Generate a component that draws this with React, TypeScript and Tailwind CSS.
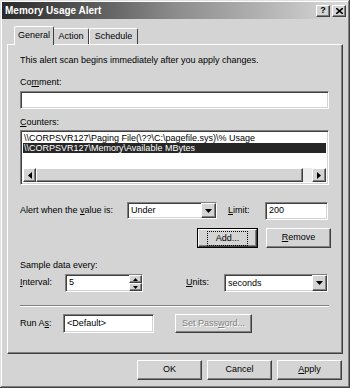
import React from 'react';

const raised =
  'border border-t-white border-l-white border-r-[#404040] border-b-[#404040] shadow-[inset_-1px_-1px_0_#808080] bg-[#d4d4d4]';
const sunken =
  'border border-t-[#808080] border-l-[#808080] border-r-white border-b-white shadow-[inset_1px_1px_0_#404040,inset_-1px_-1px_0_#d4d4d4]';

const Arrow: React.FC<{ dir: 'down' | 'up' | 'left' | 'right'; size?: number }> = ({ dir, size = 7 }) => {
  const h = Math.ceil(size / 2) + 0;
  const pts: Record<string, string> = {
    down: `0,0 ${size},0 ${size / 2},${h}`,
    up: `0,${h} ${size},${h} ${size / 2},0`,
    left: `${h},0 ${h},${size} 0,${size / 2}`,
    right: `0,0 0,${size} ${h},${size / 2}`,
  };
  const vertical = dir === 'down' || dir === 'up';
  return (
    <svg width={vertical ? size : h} height={vertical ? h : size} className="block">
      <polygon points={pts[dir]} fill="#000" />
    </svg>
  );
};

const Select: React.FC<{ value: string; className: string }> = ({ value, className }) => (
  <div className={`${sunken} bg-white flex items-center ${className}`}>
    <span className="pl-[3px] flex-1 leading-none">{value}</span>
    <div className={`${raised} w-[15px] h-full flex items-center justify-center`}>
      <Arrow dir="down" />
    </div>
  </div>
);

const Button: React.FC<{ children: React.ReactNode; className: string; disabled?: boolean }> = ({
  children,
  className,
  disabled,
}) => (
  <div
    className={`${raised} flex items-center justify-center ${className} ${
      disabled ? 'text-[#808080] [text-shadow:1px_1px_0_#fff]' : ''
    }`}
  >
    {children}
  </div>
);

export default function App() {
  return (
    <div className="w-[350px] h-[388px] bg-[#d4d4d4] p-[2px] shadow-[inset_-1px_-1px_0_#404040,inset_1px_1px_0_#e0e0e0,inset_-2px_-2px_0_#808080,inset_2px_2px_0_#fff] font-['Liberation_Sans',Arial,sans-serif] text-[9px] text-black flex flex-col">
      {/* title bar */}
      <div className="h-[17px] bg-linear-to-r from-[#2a2a2a] via-[#8c8c8c] to-[#dadada] flex items-center pl-[3px] pr-[2px]">
        <span className="text-white font-bold text-[10px] leading-none">Memory Usage Alert</span>
        <div className="ml-auto flex gap-[2px]">
          <div className={`${raised} w-[14px] h-[12px] flex items-center justify-center font-bold text-[9px] leading-none`}>
            ?
          </div>
          <div className={`${raised} w-[14px] h-[12px] flex items-center justify-center`}>
            <svg width="7" height="6">
              <path d="M0 0 L7 6 M7 0 L0 6" stroke="#000" strokeWidth="1.6" />
            </svg>
          </div>
        </div>
      </div>

      {/* tabs */}
      <div className="flex items-end pl-[12px] mt-[6px] h-[19px] relative z-10">
        <div className="w-[40px] h-[19px] bg-[#d4d4d4] border-t border-l border-white border-r border-r-[#404040] rounded-t-[2px] flex items-center justify-center -mb-[1px] pb-[1px]">
          General
        </div>
        <div className="w-[35px] h-[16px] border-t border-t-white border-r border-r-[#404040] rounded-tr-[2px] flex items-center justify-center">
          Action
        </div>
        <div className="w-[49px] h-[16px] border-t border-l border-white border-r border-r-[#404040] rounded-t-[2px] flex items-center justify-center">
          Schedule
        </div>
      </div>

      {/* tab page */}
      <div className="ml-[5px] w-[336px] h-[310px] border border-t-white border-l-white border-r-[#404040] border-b-[#404040] shadow-[inset_-1px_-1px_0_#808080] pl-[12px] pr-[13px] flex flex-col">
        <div className="mt-[10px] h-[11px] leading-[11px]">
          This alert scan begins immediately after you apply changes.
        </div>
        <div className="mt-[11px] h-[11px] leading-[11px]">
          Co<u>m</u>ment:
        </div>
        <div className={`${sunken} mt-[3px] h-[18px] bg-white`} />
        <div className="mt-[8px] h-[11px] leading-[11px]">
          <u>C</u>ounters:
        </div>
        <div className={`${sunken} mt-[2px] h-[55px] bg-white flex flex-col p-[2px]`}>
          <div className="h-[10px] leading-[10px] whitespace-nowrap pl-[1px]">
            {'\\\\CORPSVR127\\Paging File(\\??\\C:\\pagefile.sys)\\% Usage'}
          </div>
          <div className="h-[10px] leading-[10px] whitespace-nowrap pl-[1px] bg-[#262626] text-white">
            {'\\\\CORPSVR127\\Memory\\Available MBytes'}
          </div>
          <div className="mt-auto h-[14px] flex">
            <div className={`${raised} w-[13px] h-full flex items-center justify-center`}>
              <Arrow dir="left" />
            </div>
            <div className={`${raised} flex-1 h-full`} />
            <div className="w-[9px] h-full bg-[#ececec]" />
            <div className={`${raised} w-[14px] h-full flex items-center justify-center`}>
              <Arrow dir="right" />
            </div>
          </div>
        </div>

        <div className="mt-[17px] h-[17px] flex items-center">
          <span className="w-[107px]">
            Alert when the <u>v</u>alue is:
          </span>
          <Select value="Under" className="w-[90px] h-[17px]" />
          <span className="ml-[11px] w-[37px]">
            <u>L</u>imit:
          </span>
          <div className={`${sunken} w-[63px] h-[18px] bg-white flex items-center pl-[3px]`}>200</div>
        </div>

        <div className="mt-[9px] h-[20px] flex justify-end -mr-[2px]">
          <div className="w-[61px] h-[20px] border border-black">
            <Button className="w-full h-full">
              <span className="px-[8px] py-[2px] border border-dotted border-black leading-none">Add...</span>
            </Button>
          </div>
          <Button className="ml-[8px] w-[65px] h-[20px]">
            <span>
              <u>R</u>emove
            </span>
          </Button>
        </div>

        <div className="mt-[12px] h-[11px] leading-[11px]">Sample data every:</div>

        <div className="mt-[3px] h-[18px] flex items-center">
          <span className="w-[45px]">
            <u>I</u>nterval:
          </span>
          <div className={`${sunken} w-[78px] h-[18px] bg-white flex items-center`}>
            <span className="pl-[3px] flex-1">5</span>
            <div className="w-[13px] h-full flex flex-col">
              <div className={`${raised} flex-1 flex items-center justify-center`}>
                <Arrow dir="up" size={5} />
              </div>
              <div className={`${raised} flex-1 flex items-center justify-center`}>
                <Arrow dir="down" size={5} />
              </div>
            </div>
          </div>
          <span className="ml-[43px] w-[38px]">
            <u>U</u>nits:
          </span>
          <Select value="seconds" className="w-[104px] h-[18px]" />
        </div>

        <div className="mt-[13px] h-[2px] border-t border-t-[#808080] border-b border-b-white" />

        <div className="mt-[7px] h-[19px] flex items-center">
          <span className="w-[43px]">
            Run A<u>s</u>:
          </span>
          <div className={`${sunken} w-[91px] h-[19px] bg-white flex items-center pl-[3px]`}>&lt;Default&gt;</div>
          <Button className="ml-[21px] w-[77px] h-[19px]" disabled>
            <span>
              Set Pass<u>w</u>ord...
            </span>
          </Button>
        </div>
      </div>

      {/* dialog buttons */}
      <div className="mt-[6px] h-[20px] flex justify-end gap-[5px] pr-[6px]">
        <Button className="w-[65px] h-[20px]">OK</Button>
        <Button className="w-[65px] h-[20px]">Cancel</Button>
        <Button className="w-[65px] h-[20px]">
          <span>
            <u>A</u>pply
          </span>
        </Button>
      </div>
    </div>
  );
}
